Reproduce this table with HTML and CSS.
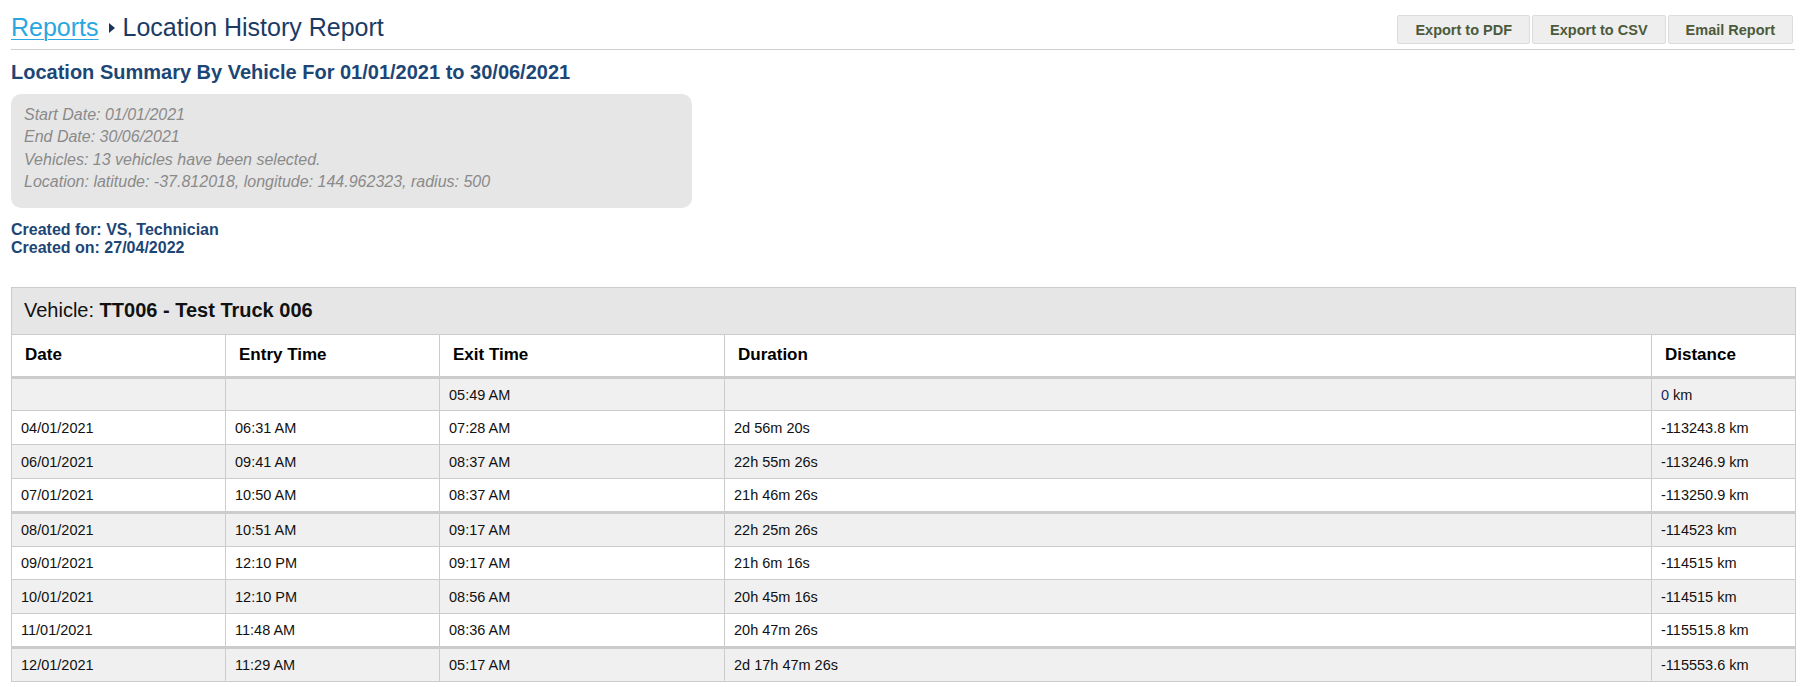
FILE: index.html
```html
<!DOCTYPE html>
<html lang="en">
<head>
<meta charset="utf-8">
<title>Location History Report</title>
<link rel="stylesheet" href="styles.css">
</head>
<body>
<div class="page">
  <header class="topbar">
    <div class="breadcrumb">
      <a class="crumb-link" href="#">Reports</a>
      <svg class="crumb-arrow" width="6" height="10" viewBox="0 0 6 10"><polygon points="0,0 6,5 0,10" fill="#1c3557"/></svg>
      <span class="crumb-current">Location History Report</span>
    </div>
    <div class="actions">
      <button class="btn">Export to PDF</button>
      <button class="btn">Export to CSV</button>
      <button class="btn">Email Report</button>
    </div>
  </header>

  <h1 class="report-title">Location Summary By Vehicle For 01/01/2021 to 30/06/2021</h1>

  <div class="criteria">
    <div class="criteria-line">Start Date: 01/01/2021</div>
    <div class="criteria-line">End Date: 30/06/2021</div>
    <div class="criteria-line">Vehicles: 13 vehicles have been selected.</div>
    <div class="criteria-line">Location: latitude: -37.812018, longitude: 144.962323, radius: 500</div>
  </div>

  <div class="created">
    <div>Created for: VS, Technician</div>
    <div>Created on: 27/04/2022</div>
  </div>

  <table class="report-table">
    <colgroup>
      <col class="c-date">
      <col class="c-entry">
      <col class="c-exit">
      <col class="c-duration">
      <col class="c-distance">
    </colgroup>
    <thead>
      <tr class="vehicle-row">
        <th colspan="5">Vehicle: <strong>TT006 - Test Truck 006</strong></th>
      </tr>
      <tr class="col-head">
        <th>Date</th>
        <th>Entry Time</th>
        <th>Exit Time</th>
        <th>Duration</th>
        <th>Distance</th>
      </tr>
    </thead>
    <tbody>
      <tr class="alt"><td></td><td></td><td>05:49 AM</td><td></td><td><span class="zero">0</span> km</td></tr>
      <tr><td>04/01/2021</td><td>06:31 AM</td><td>07:28 AM</td><td>2d 56m 20s</td><td>-113243.8 km</td></tr>
      <tr class="alt"><td>06/01/2021</td><td>09:41 AM</td><td>08:37 AM</td><td>22h 55m 26s</td><td>-113246.9 km</td></tr>
      <tr class="group-end"><td>07/01/2021</td><td>10:50 AM</td><td>08:37 AM</td><td>21h 46m 26s</td><td>-113250.9 km</td></tr>
      <tr class="alt"><td>08/01/2021</td><td>10:51 AM</td><td>09:17 AM</td><td>22h 25m 26s</td><td>-114523 km</td></tr>
      <tr><td>09/01/2021</td><td>12:10 PM</td><td>09:17 AM</td><td>21h 6m 16s</td><td>-114515 km</td></tr>
      <tr class="alt"><td>10/01/2021</td><td>12:10 PM</td><td>08:56 AM</td><td>20h 45m 16s</td><td>-114515 km</td></tr>
      <tr class="group-end"><td>11/01/2021</td><td>11:48 AM</td><td>08:36 AM</td><td>20h 47m 26s</td><td>-115515.8 km</td></tr>
      <tr class="alt"><td>12/01/2021</td><td>11:29 AM</td><td>05:17 AM</td><td>2d 17h 47m 26s</td><td>-115553.6 km</td></tr>
    </tbody>
  </table>
</div>
</body>
</html>
```

FILE: styles.css
```css
* { box-sizing: border-box; }

html, body {
  margin: 0;
  padding: 0;
  background: #ffffff;
  font-family: "Liberation Sans", Arial, sans-serif;
  color: #111;
}

.page {
  padding: 0 8px 0 11px;
}

.topbar {
  display: flex;
  justify-content: space-between;
  align-items: flex-end;
  height: 50px;
  border-bottom: 1px solid #cfcfcf;
}

.breadcrumb {
  display: flex;
  align-items: center;
  font-size: 25px;
  line-height: 28px;
  padding-bottom: 8px;
  white-space: nowrap;
}

.crumb-link {
  color: #2aa6e0;
  text-decoration: underline;
  text-decoration-thickness: 1px;
  text-underline-offset: 3px;
}

.crumb-arrow {
  margin: 2px 8px 0 10px;
}

.crumb-current {
  color: #1b3a64;
}

.actions {
  display: flex;
  gap: 2px;
  margin-bottom: 5px;
  margin-right: 2px;
}

.btn {
  height: 29px;
  padding: 0 17px;
  border: 1px solid #dcdcdc;
  border-radius: 2px;
  background: #eeeeee;
  color: #4b5a3b;
  font-family: "Liberation Sans", Arial, sans-serif;
  font-weight: bold;
  font-size: 14.5px;
  cursor: pointer;
}

.report-title {
  margin: 11px 0 0;
  font-size: 20px;
  line-height: 23px;
  font-weight: bold;
  color: #1c4676;
}

.criteria {
  width: 681px;
  margin-top: 10px;
  padding: 10px 13px 14px;
  background: #e6e6e6;
  border-radius: 10px;
  color: #8a8a8a;
  font-style: italic;
  font-size: 16px;
  line-height: 22.4px;
}

.created {
  margin-top: 13px;
  font-size: 16px;
  line-height: 18px;
  font-weight: bold;
  color: #1c4676;
}

.report-table {
  width: 1784px;
  margin-top: 30px;
  border-collapse: collapse;
  table-layout: fixed;
  border: 1px solid #cccccc;
}

.c-date { width: 214px; }
.c-entry { width: 214px; }
.c-exit { width: 285px; }
.c-duration { width: 927px; }
.c-distance { width: 144px; }

.vehicle-row th {
  height: 47px;
  padding: 0 12px;
  background: #e6e6e6;
  border-bottom: 1px solid #cccccc;
  text-align: left;
  font-size: 20px;
  font-weight: normal;
  color: #111;
}

.vehicle-row strong {
  font-weight: bold;
}

.col-head th {
  height: 43px;
  padding: 0 13px;
  text-align: left;
  font-size: 17px;
  font-weight: bold;
  color: #000;
  border-left: 1px solid #cccccc;
  border-bottom: 3px solid #cccccc;
  background: #fff;
}

.report-table td {
  height: 33.8px;
  padding: 0 9px;
  font-size: 14.5px;
  color: #111;
  border-left: 1px solid #cccccc;
  border-bottom: 1px solid #cccccc;
  white-space: nowrap;
}

.report-table tr.alt td {
  background: #f0f0f0;
}

.report-table tr.group-end td {
  border-bottom: 3px solid #cccccc;
}

.zero {
  color: #1c2a66;
}
```
